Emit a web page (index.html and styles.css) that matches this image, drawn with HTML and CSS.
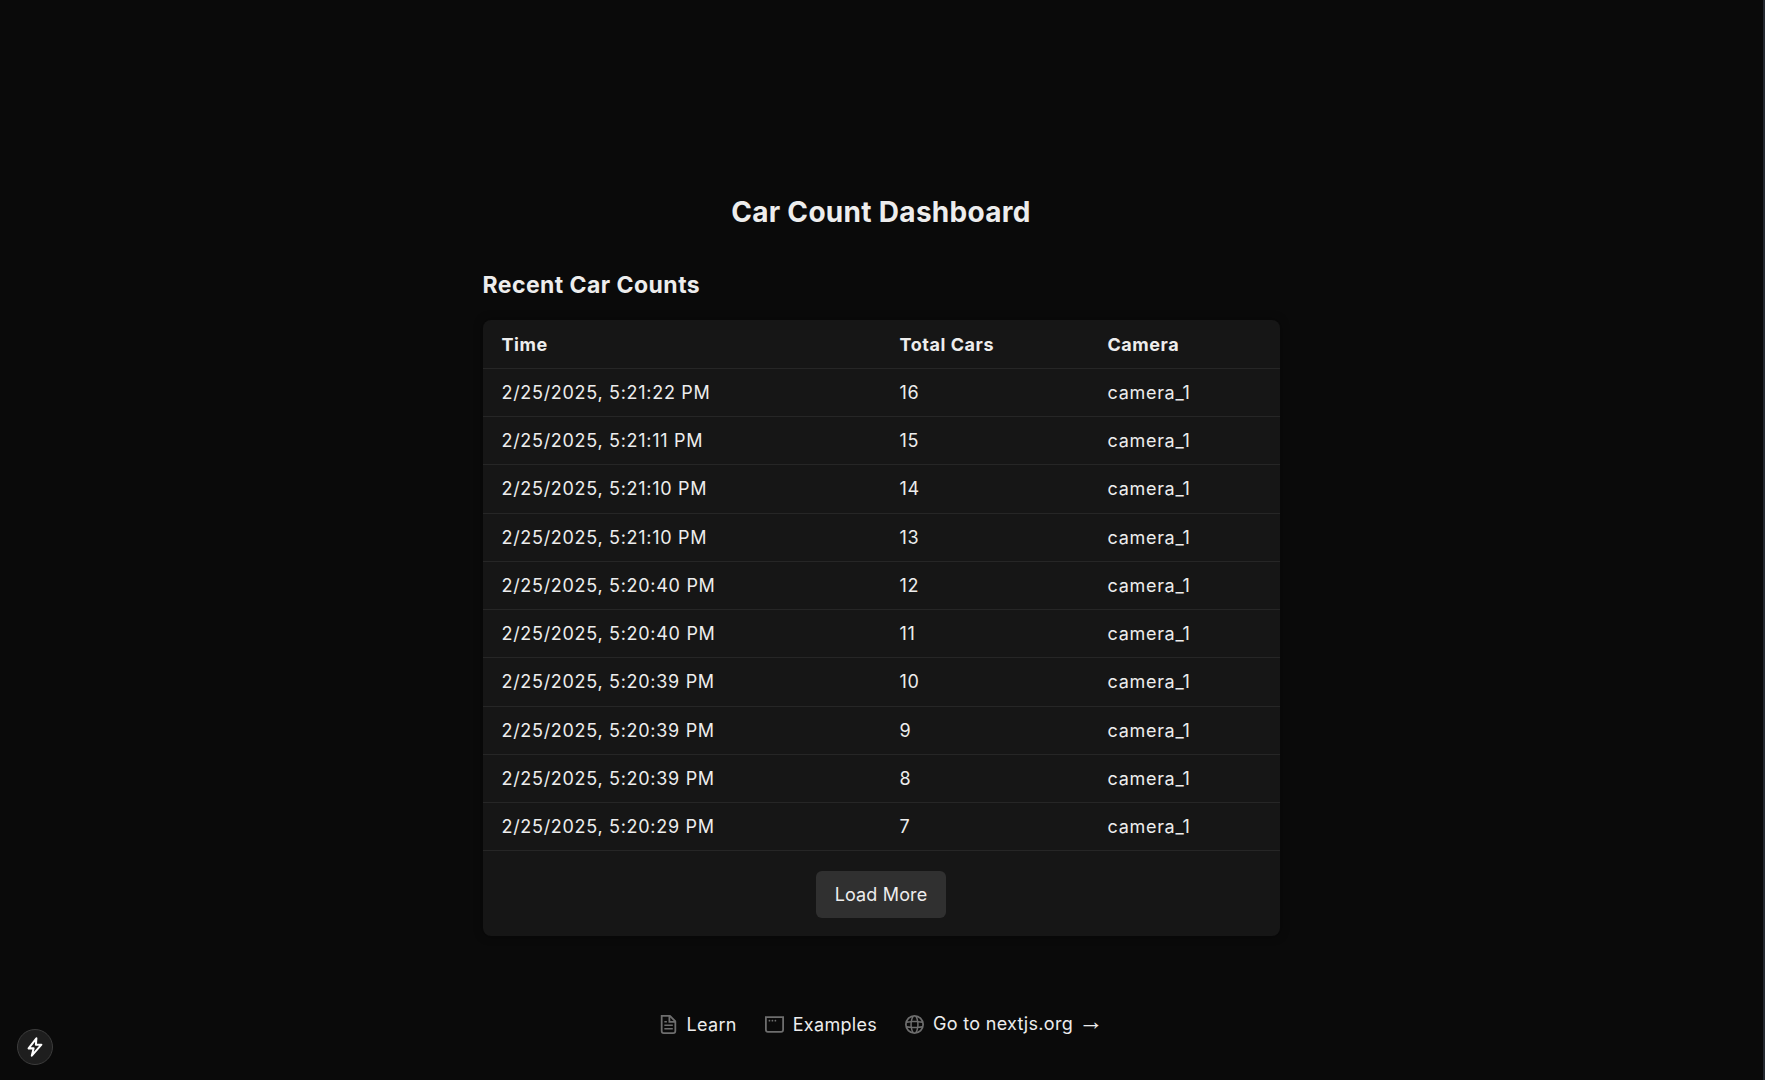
FILE: index.html
```html
<!DOCTYPE html>
<html lang="en">
<head>
<title>Car Count Dashboard</title>
<link rel="stylesheet" href="styles.css">
</head>
<body>
<main class="page">
    <h1 class="title">Car Count Dashboard</h1>
    <h2 class="subtitle">Recent Car Counts</h2>
    <div class="card">
        <table class="counts">
            <thead>
                <tr><th class="col-time">Time</th><th class="col-total">Total Cars</th><th>Camera</th></tr>
            </thead>
            <tbody>
                <tr><td>2/25/2025, 5:21:22 PM</td><td>16</td><td>camera_1</td></tr>
                <tr><td>2/25/2025, 5:21:11 PM</td><td>15</td><td>camera_1</td></tr>
                <tr><td>2/25/2025, 5:21:10 PM</td><td>14</td><td>camera_1</td></tr>
                <tr><td>2/25/2025, 5:21:10 PM</td><td>13</td><td>camera_1</td></tr>
                <tr><td>2/25/2025, 5:20:40 PM</td><td>12</td><td>camera_1</td></tr>
                <tr><td>2/25/2025, 5:20:40 PM</td><td>11</td><td>camera_1</td></tr>
                <tr><td>2/25/2025, 5:20:39 PM</td><td>10</td><td>camera_1</td></tr>
                <tr><td>2/25/2025, 5:20:39 PM</td><td>9</td><td>camera_1</td></tr>
                <tr><td>2/25/2025, 5:20:39 PM</td><td>8</td><td>camera_1</td></tr>
                <tr><td>2/25/2025, 5:20:29 PM</td><td>7</td><td>camera_1</td></tr>
            </tbody>
        </table>
        <div class="more"><button class="more-btn">Load More</button></div>
    </div>
</main>
<footer class="links">
    <a href="#"><svg width="19" height="19" viewBox="0 0 16 16" fill="#6e6e6e"><path fill-rule="evenodd" clip-rule="evenodd" d="M14.5 13.5V5.41a1 1 0 0 0-.3-.7L9.8.29A1 1 0 0 0 9.08 0H1.5v13.5A2.5 2.5 0 0 0 4 16h8a2.5 2.5 0 0 0 2.5-2.5m-1.5 0v-7H8v-5H3v12a1 1 0 0 0 1 1h8a1 1 0 0 0 1-1M9.5 5V2.12L12.38 5zM5.13 5h-.62v1.25h2.12V5zm-.62 3h7.12v1.25H4.5zm.62 3h-.62v1.25h7.12V11z"/></svg>Learn</a>
    <a href="#"><svg width="19" height="19" viewBox="0 0 16 16" fill="#6e6e6e"><path fill-rule="evenodd" clip-rule="evenodd" d="M1.5 2.5h13v10a1 1 0 0 1-1 1h-11a1 1 0 0 1-1-1zM0 1h16v11.5a2.5 2.5 0 0 1-2.5 2.5h-11A2.5 2.5 0 0 1 0 12.5zm3.75 4.5a.75.75 0 1 0 0-1.5.75.75 0 0 0 0 1.5M7 4.75a.75.75 0 1 1-1.5 0 .75.75 0 0 1 1.5 0m1.75.75a.75.75 0 1 0 0-1.5.75.75 0 0 0 0 1.5"/></svg>Examples</a>
    <a href="#"><svg width="19" height="19" viewBox="0 0 16 16" fill="#6e6e6e"><path fill-rule="evenodd" clip-rule="evenodd" d="M10.27 14.1a6.5 6.5 0 0 0 3.67-3.45q-1.24.21-2.7.34-.31 1.83-.97 3.1M8 16A8 8 0 1 0 8 0a8 8 0 0 0 0 16m.48-1.52a7 7 0 0 1-.96 0H7.5a4 4 0 0 1-.84-1.32q-.38-.89-.63-2.08a40 40 0 0 0 3.92 0q-.25 1.2-.63 2.08a4 4 0 0 1-.84 1.32zm2.94-4.76q1.66-.15 2.95-.43a7 7 0 0 0 0-2.58q-1.3-.27-2.95-.43a18 18 0 0 1 0 3.44m-1.27-3.54a17 17 0 0 1 0 3.64 39 39 0 0 1-4.3 0 17 17 0 0 1 0-3.64 39 39 0 0 1 4.3 0m1.1-1.17q1.45.13 2.69.34a6.5 6.5 0 0 0-3.67-3.44q.65 1.26.98 3.1M8.48 1.5l.01.02q.41.37.84 1.31.38.89.63 2.08a40 40 0 0 0-3.92 0q.25-1.2.63-2.08a4 4 0 0 1 .85-1.32 7 7 0 0 1 .96 0m-2.75.4a6.5 6.5 0 0 0-3.67 3.44 29 29 0 0 1 2.7-.34q.31-1.83.97-3.1M4.58 6.28q-1.66.16-2.95.43a7 7 0 0 0 0 2.58q1.3.27 2.95.43a18 18 0 0 1 0-3.44m.17 4.71q-1.45-.12-2.69-.34a6.5 6.5 0 0 0 3.67 3.44q-.65-1.27-.98-3.1"/></svg><span class="go">Go to nextjs.org <span class="arrow">→</span></span></a>
</footer>
<button class="dev-badge" aria-label="Next.js dev tools"><svg width="22" height="22" viewBox="0 0 24 24" fill="none" stroke="#fff" stroke-width="2.2" stroke-linejoin="round"><path d="M13.5 2.5 5 13.5h5.5L8.5 21.5 19 9.5h-6z"/></svg></button>
</body>
</html>
```

FILE: styles.css
```css
* { box-sizing: border-box; }
html, body { height: 100%; }
body { margin: 0; padding-right: 1px; border-right: 2px solid #23272e; background: #0a0a0a; color: #ededed; font-family: Inter, "Liberation Sans", sans-serif; display: flex; flex-direction: column; }

.page { width: 797px; margin: 0 auto; padding-top: 194px; flex: 1; }
.title { margin: 0 0 39px; font-size: 28px; line-height: 36px; font-weight: 700; letter-spacing: 0.3px; text-align: center; }
.subtitle { margin: 0 0 19px; font-size: 23px; line-height: 32px; font-weight: 700; letter-spacing: 0.45px; }

.card { background: #161616; border-radius: 8px; overflow: hidden; box-shadow: 0 0 10px rgba(0, 0, 0, 0.4); }
.counts { width: 100%; border-collapse: collapse; font-size: 18px; letter-spacing: 0.7px; }
.counts th, .counts td { height: 48.25px; padding: 0 18px 0 19px; text-align: left; border-bottom: 1px solid #262626; }
.counts th { padding-top: 1px; font-weight: 700; letter-spacing: 0.55px; }
.col-time { width: 398px; }
.col-total { width: 208px; }

.more { display: flex; justify-content: center; padding: 20px 0 18px; }
.more-btn { height: 47px; padding: 0 19px; border: 0; border-radius: 6px; background: #303030; color: #ededed; font: inherit; font-size: 18px; letter-spacing: 0.15px; }

.links { display: flex; justify-content: center; gap: 28px; padding-bottom: 45px; font-size: 18px; letter-spacing: 0.3px; }
.links a { display: flex; align-items: center; gap: 9px; color: #ededed; text-decoration: none; }
.go { line-height: 22px; }
.arrow { font-family: "Liberation Sans", sans-serif; font-size: 25px; line-height: 1px; letter-spacing: 0; }

.dev-badge { position: absolute; left: 17px; bottom: 15px; width: 36px; height: 36px; padding: 0; border-radius: 50%; border: 1px solid #3c3c3c; background: #1e1e1e; display: flex; align-items: center; justify-content: center; }
```
